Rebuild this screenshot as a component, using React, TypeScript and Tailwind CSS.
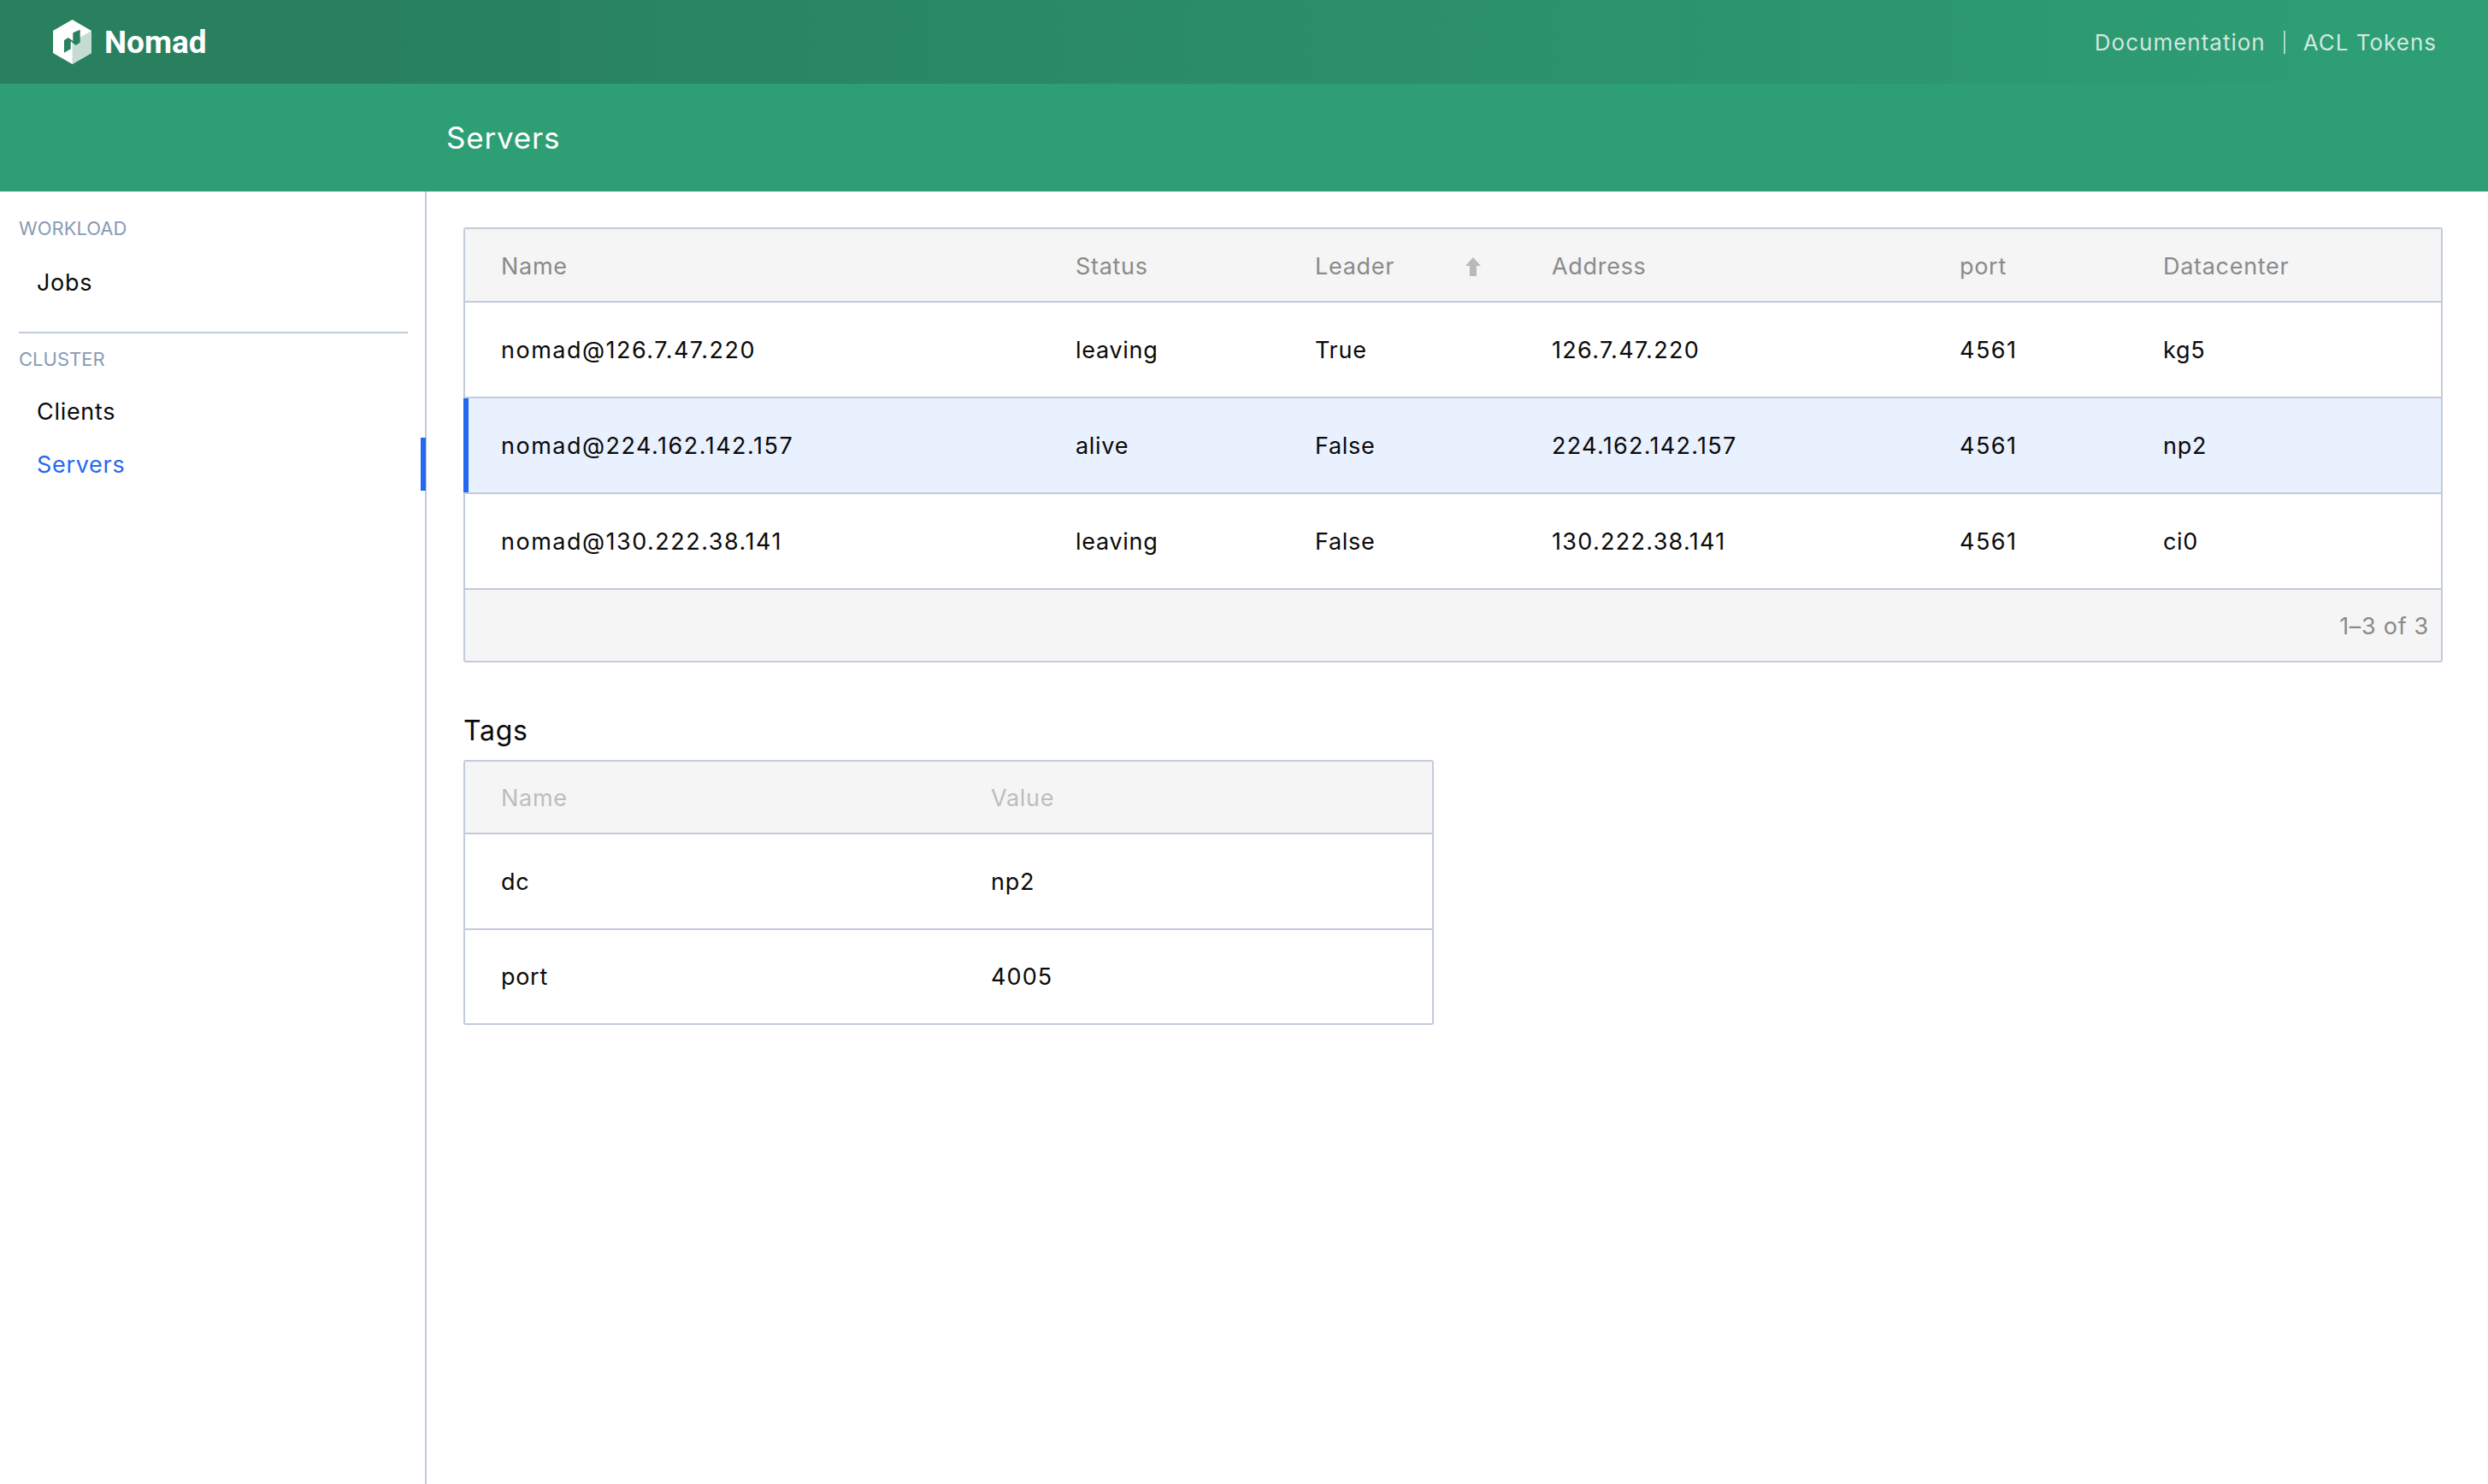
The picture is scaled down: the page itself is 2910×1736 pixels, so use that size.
const INTER = "font-['Inter','Noto_Sans',sans-serif]";

const servers = [
  { name: 'nomad@126.7.47.220', status: 'leaving', leader: 'True', address: '126.7.47.220', port: '4561', dc: 'kg5' },
  { name: 'nomad@224.162.142.157', status: 'alive', leader: 'False', address: '224.162.142.157', port: '4561', dc: 'np2', active: true },
  { name: 'nomad@130.222.38.141', status: 'leaving', leader: 'False', address: '130.222.38.141', port: '4561', dc: 'ci0' },
];

function Logo() {
  return (
    <svg viewBox="0 0 60 60" className="w-[60px] h-[60px] shrink-0">
      <polygon points="28.5,4 51,17 51,43 28.5,56 6,43 6,17" fill="#ffffff" />
      <polygon points="28.5,30 51,17 51,43 28.5,56" fill="#c5dcd3" />
      <polygon points="19,28 24,25 29.3,29 29.3,19.3 37.7,15.7 37.7,30.7 32.7,34 26.7,29.3 26.7,38.3 19,42.7" fill="#29805f" />
    </svg>
  );
}

function SortArrow() {
  return (
    <svg viewBox="0 0 18 22" className="w-[18px] h-[22px]">
      <polygon points="9,0 18,10 13,10 13,22 5,22 5,10 0,10" fill="#b9b9b9" />
    </svg>
  );
}

function NavItem({ label, active }: { label: string; active?: boolean }) {
  return (
    <div className="relative h-[62px] flex items-center pl-[43px] pt-[2px]">
      <span className={active ? 'text-[#2468f2]' : 'text-[#0a0a0a]'}>{label}</span>
      {active && <div className="absolute -right-px top-0 bottom-0 w-[6px] bg-[#2468f2]" />}
    </div>
  );
}

export default function App() {
  return (
    <div className={`${INTER} min-h-[1736px] flex flex-col bg-white text-[27px] text-[#0a0a0a] tracking-[0.7px]`}>
      <header className="h-[98px] flex items-center justify-between bg-linear-to-r from-[#28805f] from-[15%] to-[#2e9f75] to-[97%] pl-[56px] pr-[60px]">
        <div className="flex items-center">
          <Logo />
          <span className="ml-[6px] pt-[2px] font-['Roboto',sans-serif] font-bold text-[37px] text-white tracking-normal">Nomad</span>
        </div>
        <nav className="flex items-center pt-[1px] text-[rgba(255,255,255,0.78)] text-[26px] tracking-[1px]">
          <span>Documentation</span>
          <span className="w-[2px] h-[27px] bg-[rgba(255,255,255,0.6)] mx-[21px]" />
          <span>ACL Tokens</span>
        </nav>
      </header>

      <div className="h-[126px] flex items-center bg-[#2e9f75] pl-[522px]">
        <h1 className="text-[35px] text-white tracking-[0.8px]">Servers</h1>
      </div>

      <div className="flex flex-1">
        <aside className="w-[499px] shrink-0 border-r-2 border-[#c2cbda] pt-[30px]">
          <div className="pl-[22px] text-[22px] leading-[26px] text-[#8a9bb5] tracking-normal">WORKLOAD</div>
          <div className="mt-[19px]">
            <NavItem label="Jobs" />
          </div>
          <div className="h-[2px] bg-[#c2cbda] ml-[22px] mr-[20px] mt-[27px]" />
          <div className="pl-[22px] mt-[17px] text-[22px] leading-[26px] text-[#8a9bb5] tracking-normal">CLUSTER</div>
          <div className="mt-[17px]">
            <NavItem label="Clients" />
            <NavItem label="Servers" active />
          </div>
        </aside>

        <main className="flex-1 pt-[42px] pl-[43px] pr-[53px]">
          <div className="border-2 border-[#c2cbda] rounded-[3px]">
            <table className="w-full table-fixed border-separate border-spacing-0">
              <colgroup>
                <col className="w-[673px]" />
                <col className="w-[280px]" />
                <col className="w-[277px]" />
                <col className="w-[477px]" />
                <col className="w-[238px]" />
                <col />
              </colgroup>
              <thead>
                <tr className="h-[84px] bg-[#f5f5f5] text-[#8a8a8a] text-left">
                  <th className="font-normal pl-[42px] pt-[4px]">Name</th>
                  <th className="font-normal pl-[41px] pt-[4px]">Status</th>
                  <th className="font-normal pl-[41px] pt-[4px]">
                    <div className="flex items-center justify-between pr-[42px]">
                      <span>Leader</span>
                      <SortArrow />
                    </div>
                  </th>
                  <th className="font-normal pl-[41px] pt-[4px]">Address</th>
                  <th className="font-normal pl-[41px] pt-[4px]">port</th>
                  <th className="font-normal pl-[41px] pt-[4px]">Datacenter</th>
                </tr>
              </thead>
              <tbody>
                {servers.map((s) => (
                  <tr key={s.name} className={s.active ? 'h-[112px] bg-[#e9f0fe]' : 'h-[112px]'}>
                    <td className={s.active ? 'relative border-t-2 border-[#c2cbda] pl-[42px] pt-[2px] tracking-[1.5px]' : 'border-t-2 border-[#c2cbda] pl-[42px] pt-[2px] tracking-[1.5px]'}>
                      {s.active && <div className="absolute -left-[2px] top-0 bottom-0 w-[6px] bg-[#2468f2]" />}
                      {s.name}
                    </td>
                    <td className="border-t-2 border-[#c2cbda] pl-[41px] pt-[2px]">{s.status}</td>
                    <td className="border-t-2 border-[#c2cbda] pl-[41px] pt-[2px]">{s.leader}</td>
                    <td className="border-t-2 border-[#c2cbda] pl-[41px] pt-[2px] tracking-[1.3px]">{s.address}</td>
                    <td className="border-t-2 border-[#c2cbda] pl-[41px] pt-[2px] tracking-[1.5px]">{s.port}</td>
                    <td className="border-t-2 border-[#c2cbda] pl-[41px] pt-[2px]">{s.dc}</td>
                  </tr>
                ))}
              </tbody>
            </table>
            <div className="h-[85px] border-t-2 border-[#c2cbda] bg-[#f5f5f5] flex items-center justify-end pr-[14px] pt-[3px] text-[#8a8a8a]">
              1–3 of 3
            </div>
          </div>

          <h2 className="mt-[60px] text-[32px] leading-[40px] text-[#0a0a0a]">Tags</h2>
          <div className="mt-[14px] w-[1135px] border-2 border-[#c2cbda] rounded-[3px]">
            <table className="w-full table-fixed border-separate border-spacing-0">
              <colgroup>
                <col className="w-[574px]" />
                <col />
              </colgroup>
              <thead>
                <tr className="h-[83px] bg-[#f5f5f5] text-[#bdbdbd] text-left">
                  <th className="font-normal pl-[42px] pt-[3px]">Name</th>
                  <th className="font-normal pl-[41px] pt-[3px]">Value</th>
                </tr>
              </thead>
              <tbody>
                <tr className="h-[112px]">
                  <td className="border-t-2 border-[#c2cbda] pl-[42px] pt-[2px]">dc</td>
                  <td className="border-t-2 border-[#c2cbda] pl-[41px] pt-[2px]">np2</td>
                </tr>
                <tr className="h-[111px]">
                  <td className="border-t-2 border-[#c2cbda] pl-[42px] pt-[2px]">port</td>
                  <td className="border-t-2 border-[#c2cbda] pl-[41px] pt-[2px] tracking-[1.1px]">4005</td>
                </tr>
              </tbody>
            </table>
          </div>
        </main>
      </div>
    </div>
  );
}
